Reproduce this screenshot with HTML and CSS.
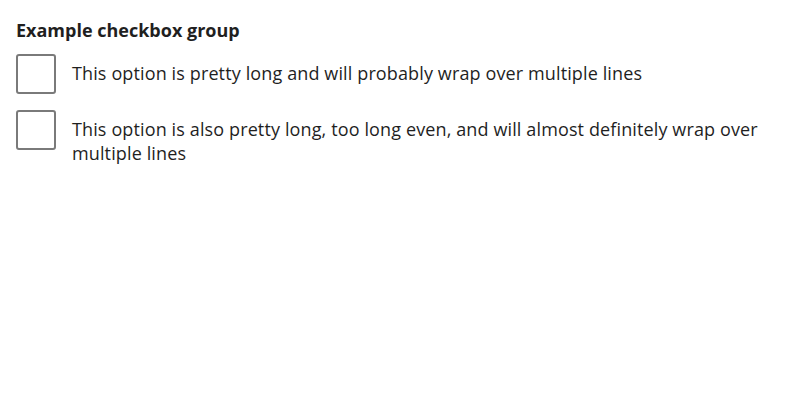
FILE: index.html
```html
<!DOCTYPE html>
<html>
<head>
<meta charset="utf-8">
<link rel="stylesheet" href="styles.css">
</head>
<body>
<fieldset class="group">
  <legend class="legend">Example checkbox group</legend>
  <label class="option">
    <span class="box"></span>
    <span class="text">This option is pretty long and will probably wrap over multiple lines</span>
  </label>
  <label class="option">
    <span class="box"></span>
    <span class="text">This option is also pretty long, too long even, and will almost definitely wrap over multiple lines</span>
  </label>
</fieldset>
</body>
</html>
```

FILE: styles.css
```css
html, body {
  margin: 0;
  padding: 0;
  background: #fff;
}
body {
  font-family: "Open Sans", sans-serif;
  color: #1f1f1f;
  padding: 18px 16px;
}
.group {
  border: 0;
  margin: 0;
  padding: 0;
  display: flex;
  flex-direction: column;
  gap: 16px;
}
.legend {
  padding: 0;
  font-weight: 700;
  font-size: 18px;
  line-height: 24px;
  margin-bottom: 12px;
}
.option {
  display: flex;
  gap: 16px;
  align-items: flex-start;
}
.box {
  flex: none;
  width: 36px;
  height: 36px;
  border: 2px solid #7a7a7a;
  border-radius: 3px;
}
.text {
  font-size: 18px;
  line-height: 24px;
  letter-spacing: 0.125px;
  padding-top: 7px;
}
```
